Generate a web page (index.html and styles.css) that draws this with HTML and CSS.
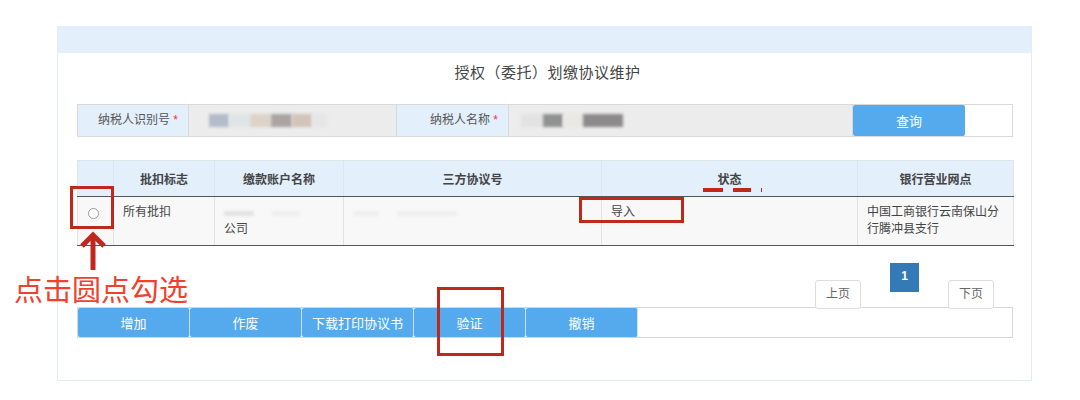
FILE: index.html
```html
<!DOCTYPE html>
<html lang="zh-CN">
<head>
  <meta charset="UTF-8" />
  <title>授权（委托）划缴协议维护</title>
  <link rel="stylesheet" href="styles.css">
</head>
<body>
  <div class="page">
    <div class="panel">
      <div class="panel-head"></div>
      <div class="title">授权（委托）划缴协议维护</div>

      <div class="search">
        <div class="label label-id">纳税人识别号 <span class="req">*</span></div>
        <div class="input input-id">
          <span class="blur b1"></span><span class="blur b2"></span><span class="blur b3"></span><span class="blur b4"></span><span class="blur b5"></span><span class="blur b6"></span>
        </div>
        <div class="label label-name">纳税人名称 <span class="req">*</span></div>
        <div class="input input-name">
          <span class="blur c1"></span><span class="blur c2"></span><span class="blur c3"></span><span class="blur c4"></span>
        </div>
        <button class="query">查询</button>
        <div class="search-rest"></div>
      </div>

      <table class="grid">
        <thead>
          <tr>
            <th class="col-radio"></th>
            <th class="col-flag">批扣标志</th>
            <th class="col-acct">缴款账户名称</th>
            <th class="col-proto">三方协议号</th>
            <th class="col-state">状态</th>
            <th class="col-bank">银行营业网点</th>
          </tr>
        </thead>
        <tbody>
          <tr>
            <td class="cell-radio"><span class="radio"></span></td>
            <td>所有批扣</td>
            <td><span class="blur faint f1"></span><span class="blur faint f2"></span><br>公司</td>
            <td><span class="blur faint f3"></span><span class="blur faint f4"></span></td>
            <td>导入</td>
            <td>中国工商银行云南保山分行腾冲县支行</td>
          </tr>
        </tbody>
      </table>

      <div class="pager">
        <span class="page-btn">上页</span>
        <span class="page-num">1</span>
        <span class="page-btn">下页</span>
      </div>

      <div class="actions">
        <button class="act">增加</button>
        <button class="act">作废</button>
        <button class="act">下载打印协议书</button>
        <button class="act">验证</button>
        <button class="act">撤销</button>
      </div>
    </div>

    <!-- annotations drawn over the screenshot -->
    <div class="mark mark-radio"></div>
    <div class="mark mark-state"></div>
    <div class="mark mark-verify"></div>
    <span class="dash d1"></span><span class="dash d2"></span><span class="dash d3"></span>
    <svg class="arrow" width="32" height="42" viewBox="0 0 32 42">
      <polyline points="4,16 15,5 26,16" fill="none" stroke="#c0281e" stroke-width="5" />
      <line x1="15" y1="6" x2="15" y2="40" stroke="#c0281e" stroke-width="5" />
    </svg>
    <div class="note">点击圆点勾选</div>
  </div>
</body>
</html>
```

FILE: styles.css
```css
* {
  box-sizing: border-box;
}
body {
  margin: 0;
  background: #fff;
  color: #333;
  font-family: "Liberation Sans", "Noto Sans CJK SC", sans-serif;
  font-size: 12px;
}
.page {
  position: relative;
  width: 1080px;
  height: 400px;
  padding: 26px 0 0 57px;
}
.panel {
  width: 975px;
  height: 355px;
  border: 1px solid #e4ecf5;
  border-top: none;
}
.panel-head {
  height: 27px;
  background: #e3effb;
}
.title {
  margin-top: 10px;
  text-align: center;
  font-size: 15px;
  line-height: 20px;
  letter-spacing: 0.5px;
  color: #444;
  padding-left: 6px;
}

/* search row */
.search {
  display: flex;
  height: 33px;
  margin: 21px 18px 0 19px;
  border: 1px solid #d9d9d9;
}
.label {
  background: #e3effb;
  text-align: right;
  padding-right: 10px;
  line-height: 31px;
  color: #555;
}
.label-id {
  width: 110px;
}
.label-name {
  width: 111px;
}
.req {
  color: #e33;
}
.input {
  background: #ececec;
  display: flex;
  align-items: center;
  border-left: 1px solid #d9d9d9;
  border-right: 1px solid #d9d9d9;
}
.input-id {
  width: 209px;
  padding-left: 20px;
}
.input-name {
  width: 345px;
  padding-left: 12px;
}
.blur {
  display: inline-block;
  height: 13px;
  filter: blur(1.5px);
}
.b1 { width: 20px; background: #b3bcc9; }
.b2 { width: 21px; background: #dfe5e6; }
.b3 { width: 21px; background: #ddd3c8; }
.b4 { width: 21px; background: #aaa4a2; }
.b5 { width: 20px; background: #d2c4ba; }
.b6 { width: 15px; background: #e6e6e6; }
.c1 { width: 22px; background: #e2e2e2; }
.c2 { width: 20px; background: #8f9291; }
.c3 { width: 20px; background: #eae8e2; }
.c4 { width: 40px; background: #8c8a8b; }
.query {
  width: 112px;
  border: none;
  border-radius: 2px;
  background: #55aaee;
  color: #fff;
  font-family: inherit;
  font-size: 13px;
}
.search-rest {
  flex: 1;
}

/* table */
.grid {
  width: 936px;
  margin: 23px 0 0 19px;
  border-collapse: collapse;
  table-layout: fixed;
}
.grid th {
  height: 36px;
  background: #e3effb;
  border: 1px solid #dde4ec;
  border-bottom: 1px solid #555;
  font-weight: bold;
  color: #444;
}
.grid td {
  height: 49px;
  background: #f8f8f8;
  border: 1px solid #e2e2e2;
  border-bottom: 1px solid #555;
  vertical-align: top;
  padding: 7px 8px 0 9px;
  line-height: 17px;
  color: #444;
}
.col-radio { width: 36px; }
.col-flag { width: 101px; }
.col-acct { width: 129px; }
.col-proto { width: 258px; }
.col-state { width: 256px; }
.col-bank { width: 156px; }
.grid td.cell-radio {
  padding: 11px 0 0 10px;
}
.radio {
  display: block;
  width: 11px;
  height: 11px;
  border: 1px solid #999;
  border-radius: 50%;
  background: #fff;
}
.faint {
  height: 5px;
  margin: 6px 18px 0 0;
  background: #eeeeee;
}
.f1 { width: 30px; background: #e2e2e2; }
.f2 { width: 28px; }
.f3 { width: 26px; }
.f4 { width: 60px; }

/* pager */
.pager {
  display: flex;
  justify-content: flex-end;
  align-items: flex-start;
  gap: 29px;
  height: 44px;
  margin: 17px 37px 0 0;
}
.page-btn {
  position: relative;
  z-index: 1;
  width: 46px;
  height: 29px;
  margin-top: 17px;
  border: 1px solid #ddd;
  border-radius: 3px;
  background: #fff;
  color: #666;
  text-align: center;
  line-height: 27px;
}
.page-num {
  width: 29px;
  height: 29px;
  background: #337ab7;
  color: #fff;
  font-weight: bold;
  text-align: center;
  line-height: 27px;
}

/* action bar */
.actions {
  display: flex;
  height: 31px;
  margin: 0 18px 0 19px;
  border: 1px solid #d6d6d6;
}
.act {
  width: 112px;
  border: none;
  border-right: 1px solid #cfe2f3;
  border-radius: 2px;
  background: #55aaee;
  color: #fff;
  font-family: inherit;
  font-size: 13px;
}

/* annotations */
.mark {
  position: absolute;
  border: 3px solid #c0281e;
}
.mark-radio {
  left: 70px;
  top: 186px;
  width: 44px;
  height: 43px;
}
.mark-state {
  left: 579px;
  top: 197px;
  width: 105px;
  height: 26px;
}
.mark-verify {
  left: 437px;
  top: 287px;
  width: 67px;
  height: 69px;
}
.dash {
  position: absolute;
  top: 188px;
  height: 4px;
  background: #c0281e;
}
.d1 { left: 703px; width: 20px; }
.d2 { left: 733px; width: 18px; }
.d3 { left: 761px; width: 1px; }
.arrow {
  position: absolute;
  left: 78px;
  top: 230px;
}
.note {
  position: absolute;
  left: 14px;
  top: 270px;
  font-family: "Noto Sans CJK SC", sans-serif;
  font-size: 29px;
  line-height: 36px;
  color: #f2402f;
}
```
